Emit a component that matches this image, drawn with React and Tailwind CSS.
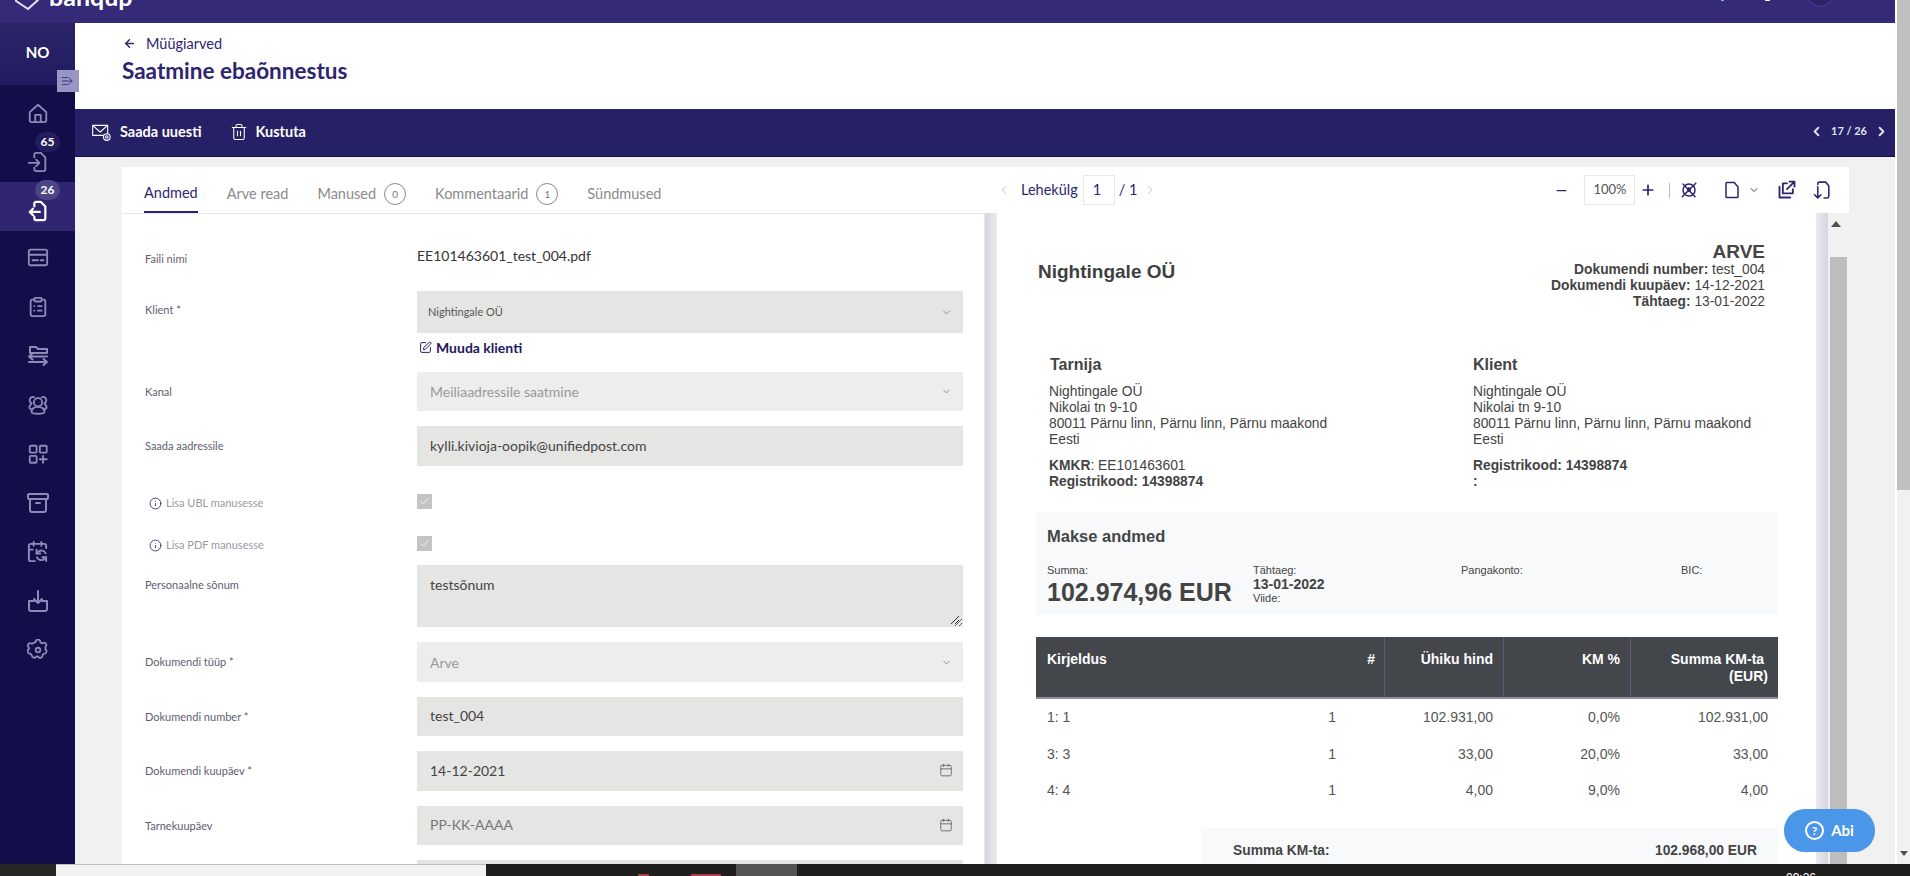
import React from 'react';
import { ChevronDown, ChevronLeft, ChevronRight, Calendar, Minus, Plus, ArrowLeft, Info, Trash2, Check, SquarePen, Archive, ClipboardList, CalendarSync } from 'lucide-react';

const Ico = ({ children, w = 22, h = 22, sw = 2, vb = '0 0 24 24', className = '' }) => (
  <svg width={w} height={h} viewBox={vb} fill="none" stroke="currentColor" strokeWidth={sw} strokeLinecap="round" strokeLinejoin="round" className={className}>
    {children}
  </svg>
);

const NavIcon = ({ h = 'h-[49px]', active, badge, badgeDark, children }) => (
  <div className={`relative flex w-full shrink-0 items-center justify-center ${h} ${active ? 'bg-[#2f2570] text-white' : 'text-[#8e8ab6]'}`}>
    {badge && (
      <span className={`absolute left-[35px] flex h-[20px] w-[25px] items-center justify-center rounded-full text-[12px] font-bold text-white ${badgeDark ? 'top-[-9px] bg-[#231d60]' : 'top-[-2px] bg-[#4b4486]'}`}>
        {badge}
      </span>
    )}
    {children}
  </div>
);

function Sidebar() {
  return (
    <div className="relative z-10 flex w-[75px] shrink-0 flex-col bg-[#120e4a]">
      <div className="relative flex h-[62px] items-center justify-center bg-gradient-to-b from-[#2c2469] to-[#211b5f] pb-[4px] text-[15px] font-bold text-white">
        NO
        <div className="absolute left-[57px] top-[47px] flex h-[22px] w-[22px] items-center justify-center bg-[#9a96c4] text-[#3a3180]">
          <Ico w={14} h={14} sw={1.6}>
            <path d="M2 6h10M2 12h6M2 18h10M14 7l5 5-5 5M8 12h11" />
          </Ico>
        </div>
      </div>
      <NavIcon h="h-[56px]">
        <Ico w={22} h={24}>
          <path d="M3 11 12 3l9 8v9a2 2 0 0 1-2 2H5a2 2 0 0 1-2-2z" />
          <path d="M9 22v-8h6v8" />
        </Ico>
      </NavIcon>
      <NavIcon h="h-[41px]" badge="65" badgeDark>
        <Ico w={22} h={24}>
          <path d="M8 7V4a2 2 0 0 1 2-2h5l5 5v13a2 2 0 0 1-2 2h-8a2 2 0 0 1-2-2v-2" />
          <path d="M2 13h11M10 9.500l3.500 3.500-3.500 3.500" />
        </Ico>
      </NavIcon>
      <NavIcon h="h-[49px]" active badge="26">
        <div className="mt-[8px]">
          <Ico w={22} h={24} sw={2.4}>
            <path d="M8 7V4a2 2 0 0 1 2-2h5l5 5v13a2 2 0 0 1-2 2h-8a2 2 0 0 1-2-2v-2" />
            <path d="M14 13H3M6.500 9.500 3 13l3.500 3.500" />
          </Ico>
        </div>
      </NavIcon>
      <NavIcon h="h-[52px]">
        <Ico w={24} h={22}>
          <rect x="2" y="4" width="20" height="17" rx="2" />
          <path d="M2 9.500h20M6 15.500h6M15 15.500h3" />
        </Ico>
      </NavIcon>
      <NavIcon h="h-[48px]">
        <ClipboardList size={22} strokeWidth={2} />
      </NavIcon>
      <NavIcon>
        <Ico w={24} h={24}>
          <path d="M4 9V3h6l2 2h9v4M4 9h17" />
          <path d="M3 12.500h18M6.500 9.500 3 12.500l3.500 3" />
          <path d="M3 18h18M17.500 15l3.500 3-3.500 3" />
        </Ico>
      </NavIcon>
      <NavIcon>
        <Ico w={24} h={22}>
          <circle cx="12" cy="9" r="4.500" />
          <path d="M5 20c0-4 3-6 7-6s7 2 7 6c0 2-14 2-14 0z" />
          <path d="M8 3.500a3.500 3.500 0 1 0-3 6.500L3 13c-1 2 0 3 2 4M16 3.500a3.500 3.500 0 1 1 3 6.500l2 3c1 2 0 3-2 4" />
        </Ico>
      </NavIcon>
      <NavIcon>
        <Ico w={22} h={22}>
          <rect x="3" y="3" width="7.500" height="7.500" rx="1" />
          <rect x="14" y="3" width="7.500" height="7.500" rx="1" />
          <rect x="3" y="14" width="7.500" height="7.500" rx="1" />
          <path d="M17.500 14v7.500M14 17.700h7.500" />
        </Ico>
      </NavIcon>
      <NavIcon>
        <Archive size={24} strokeWidth={2} />
      </NavIcon>
      <NavIcon>
        <CalendarSync size={23} strokeWidth={2} />
      </NavIcon>
      <NavIcon>
        <Ico w={24} h={24}>
          <path d="M12 2v12M8 10l4 4 4-4" />
          <path d="M8 12H3v8a2 2 0 0 0 2 2h14a2 2 0 0 0 2-2v-8h-5" />
        </Ico>
      </NavIcon>
      <NavIcon>
        <Ico w={22} h={22}>
          <circle cx="12" cy="12" r="2.500" />
          <path d="M9.500 3.200a2.500 2.500 0 0 1 5 0l.2.600 1.800.900.700-.200a2.500 2.500 0 0 1 3.200 3.800l-.4.500v2.200l.4.500a2.500 2.500 0 0 1-1 4.400l-.8.100-1.600 1.500-.1.700a2.500 2.500 0 0 1-4.700 1.100l-.2-.300h-1.900l-.3.300a2.500 2.500 0 0 1-4.600-1.100l-.100-.700-1.600-1.500-.8-.100a2.500 2.500 0 0 1-1-4.400l.4-.500V9.300l-.4-.500a2.500 2.500 0 0 1 3.200-3.800l.7.200 1.800-.900z" />
        </Ico>
      </NavIcon>
    </div>
  );
}

const Row = ({ label, mt, pt, children, icon }) => (
  <div className={`flex ${mt}`}>
    <div className={`flex w-[272px] shrink-0 items-center text-[11px] leading-[14px] ${pt} ${icon ? 'text-[#9a9aa2]' : 'text-[#5e6070]'}`}>
      {icon && <Info size={13} strokeWidth={1.6} className="ml-[4px] mr-[4px] text-[#2d2570]" />}
      {label}
    </div>
    <div className="w-[546px] shrink-0">{children}</div>
  </div>
);

const SelectBox = ({ h, value, small, disabled }) => (
  <div className={`flex ${h} items-center justify-between pr-[11px] ${disabled ? 'bg-[#ededed] pl-[13px] text-[14px] text-[#999999]' : 'bg-[#e5e5e3] pl-[11px] text-[#555555]'} ${small ? 'text-[11px]' : ''}`}>
    <span>{value}</span>
    <ChevronDown size={11} strokeWidth={1.8} className="text-[#777777]" />
  </div>
);

const TextBox = ({ h, value, placeholder, cal }) => (
  <div className={`relative ${h} bg-[#e5e5e3]`}>
    <input
      readOnly
      value={value}
      placeholder={placeholder}
      className="h-full w-full bg-transparent pb-[2px] pl-[13px] text-[14px] text-[#444444] outline-none placeholder:text-[#777777]"
    />
    {cal && <Calendar size={14} strokeWidth={1.5} className="absolute right-[10px] top-[12px] text-[#666666]" />}
  </div>
);

const Check2 = () => (
  <div className="flex h-[15px] w-[15px] items-center justify-center bg-[#c4c4c4] text-white">
    <Check size={11} strokeWidth={1.6} />
  </div>
);

const Badge = ({ n }) => (
  <span className="ml-[8px] flex h-[22px] w-[22px] items-center justify-center rounded-full border border-[#8a8a8a] text-[10px] text-[#777777]">{n}</span>
);

function Form() {
  return (
    <div className="h-full w-[863px] shrink-0 overflow-hidden border-r border-[#e9e9e9] bg-white pl-[23px]">
      <Row label="Faili nimi" mt="mt-[32px]" pt="h-[20px] pt-[6px]">
        <div className="text-[14px] leading-[20px] text-[#333333]">EE101463601_test_004.pdf</div>
      </Row>
      <Row label="Klient *" mt="mt-[25px]" pt="h-[38px] pt-[0px]">
        <SelectBox h="h-[42px]" value="Nightingale OÜ" small />
      </Row>
      <div className="ml-[272px] mt-[4px] flex h-[20px] items-center text-[14px] font-bold text-[#1c1860]">
        <SquarePen size={13} strokeWidth={1.8} className="ml-[2px] mr-[4px]" />
        Muuda klienti
      </div>
      <Row label="Kanal" mt="mt-[15px]" pt="h-[39px]">
        <SelectBox h="h-[39px]" value="Meiliaadressile saatmine" disabled />
      </Row>
      <Row label="Saada aadressile" mt="mt-[15px]" pt="h-[40px]">
        <TextBox h="h-[40px]" value="kylli.kivioja-oopik@unifiedpost.com" />
      </Row>
      <Row label="Lisa UBL manusesse" mt="mt-[28px]" pt="h-[18px]" icon>
        <Check2 />
      </Row>
      <Row label="Lisa PDF manusesse" mt="mt-[24px]" pt="h-[18px]" icon>
        <Check2 />
      </Row>
      <Row label="Personaalne sõnum" mt="mt-[11px]" pt="h-[40px]">
        <div className="relative">
          <textarea readOnly value="testsõnum" className="block h-[62px] w-full resize-y bg-[#e5e5e3] py-[10px] pl-[13px] pr-[12px] text-[14px] leading-[20px] text-[#444444] outline-none" />
          <svg width="10" height="10" viewBox="0 0 10 10" stroke="#333333" strokeWidth="1" className="pointer-events-none absolute bottom-[2px] right-[3px]">
            <path d="M1 9 9 1M5 9 9 5" />
          </svg>
        </div>
      </Row>
      <Row label="Dokumendi tüüp *" mt="mt-[15px]" pt="h-[40px]">
        <SelectBox h="h-[40px]" value="Arve" disabled />
      </Row>
      <Row label="Dokumendi number *" mt="mt-[15px]" pt="h-[39px]">
        <TextBox h="h-[39px]" value="test_004" />
      </Row>
      <Row label="Dokumendi kuupäev *" mt="mt-[15px]" pt="h-[40px]">
        <TextBox h="h-[40px]" value="14-12-2021" cal />
      </Row>
      <Row label="Tarnekuupäev" mt="mt-[15px]" pt="h-[39px]">
        <TextBox h="h-[39px]" placeholder="PP-KK-AAAA" cal />
      </Row>
      <Row label="" mt="mt-[15px]" pt="h-[39px]">
        <TextBox h="h-[39px]" />
      </Row>
    </div>
  );
}

function Invoice() {
  const addr = ['Nightingale OÜ', 'Nikolai tn 9-10', '80011 Pärnu linn, Pärnu linn, Pärnu maakond', 'Eesti'];
  const rows = [
    ['1: 1', '1', '102.931,00', '0,0%', '102.931,00', 'h-[36px]'],
    ['3: 3', '1', '33,00', '20,0%', '33,00', 'h-[37px]'],
    ['4: 4', '1', '4,00', '9,0%', '4,00', 'h-[36px]'],
  ];
  return (
    <div className="h-full w-[819px] shrink-0 overflow-hidden bg-white pl-[39px] pr-[38px] font-['Liberation_Sans',Arial,sans-serif] text-[13.8px] leading-[16px] text-[#444444]">
      <div className="flex justify-between pr-[13px] pt-[28px]">
        <div className="ml-[2px] mt-[21px] text-[19px] font-bold leading-[20px] text-[#3f3f3f]">Nightingale OÜ</div>
        <div className="text-right">
          <div className="text-[19px] font-bold leading-[21px]">ARVE</div>
          <div><b>Dokumendi number:</b> test_004</div>
          <div><b>Dokumendi kuupäev:</b> 14-12-2021</div>
          <div><b>Tähtaeg:</b> 13-01-2022</div>
        </div>
      </div>

      <div className="mt-[45px] flex pl-[13px]">
        <div className="w-[424px]">
          <div className="pl-[1px] text-[16px] font-bold leading-[20px]">Tarnija</div>
          <div className="mt-[9px]">{addr.map((l) => <div key={l}>{l}</div>)}</div>
          <div className="mt-[10px]"><b>KMKR</b>: EE101463601</div>
          <div className="font-bold">Registrikood: 14398874</div>
        </div>
        <div>
          <div className="text-[16px] font-bold leading-[20px]">Klient</div>
          <div className="mt-[9px]">{addr.map((l) => <div key={l}>{l}</div>)}</div>
          <div className="mt-[10px] font-bold">Registrikood: 14398874</div>
          <div className="font-bold">:</div>
        </div>
      </div>

      <div className="mt-[22px] h-[103px] bg-[#f8f9fb] pl-[11px] pt-[14px]">
        <div className="text-[16.500px] font-bold leading-[20px]">Makse andmed</div>
        <div className="mt-[18px] flex text-[11px] leading-[12px]">
          <div className="w-[206px]">
            <div>Summa:</div>
            <div className="pt-[2px] text-[25px] font-bold leading-[28px]">102.974,96 EUR</div>
          </div>
          <div className="w-[208px]">
            <div>Tähtaeg:</div>
            <div className="pt-[1px] text-[14px] font-bold leading-[15px]">13-01-2022</div>
            <div>Viide:</div>
          </div>
          <div className="w-[220px]">Pangakonto:</div>
          <div>BIC:</div>
        </div>
      </div>

      <div className="mt-[22px]">
        <div className="grid h-[62px] grid-cols-[348px_119px_127px_148px] border-b-2 border-[#8d8f94] bg-[#43464b] text-[14px] font-bold leading-[17px] text-white">
          <div className="flex justify-between pl-[11px] pr-[9px] pt-[14px]">
            <span>Kirjeldus</span>
            <span>#</span>
          </div>
          <div className="border-l border-[#5b5a80] pr-[10px] pt-[14px] text-right">Ühiku hind</div>
          <div className="border-l border-[#5b5a80] pr-[10px] pt-[14px] text-right">KM %</div>
          <div className="border-l border-[#5b5a80] pr-[10px] pt-[14px] text-right">Summa KM-ta&nbsp;<br />(EUR)</div>
        </div>
        {rows.map((r) => (
          <div key={r[0]} className={`grid grid-cols-[348px_119px_127px_148px] items-center text-[14px] text-[#555555] ${r[5]}`}>
            <div className="flex justify-between pl-[11px] pr-[48px]">
              <span>{r[0]}</span>
              <span>{r[1]}</span>
            </div>
            <div className="pr-[10px] text-right">{r[2]}</div>
            <div className="pr-[10px] text-right">{r[3]}</div>
            <div className="pr-[10px] text-right">{r[4]}</div>
          </div>
        ))}
      </div>

      <div className="ml-[165px] mt-[20px] flex h-[60px] justify-between bg-[#f8f9fb] pl-[32px] pr-[21px] pt-[15px] font-bold">
        <span>Summa KM-ta:</span>
        <span>102.968,00 EUR</span>
      </div>
    </div>
  );
}

function PdfToolbar() {
  return (
    <div className="flex h-[46px] w-[864px] shrink-0 items-center bg-white text-[14.500px] text-[#2d2570]">
      <ChevronLeft size={14} strokeWidth={1.5} className="ml-[12px] text-[#bbbbbb]" />
      <span className="ml-[10px]">Lehekülg</span>
      <div className="ml-[5px] flex h-[30px] w-[32px] items-center border border-[#e8e8e8] pl-[9px]">1</div>
      <span className="ml-[4px]">/ 1</span>
      <ChevronRight size={14} strokeWidth={1.5} className="ml-[6px] text-[#bbbbbb]" />
      <Minus size={15} strokeWidth={2} className="ml-[397px]" />
      <div className="ml-[15px] flex h-[30px] w-[51px] items-center justify-center border border-[#e8e8e8] text-[13px] text-[#555555]">100%</div>
      <Plus size={16} strokeWidth={2.6} className="ml-[5px]" />
      <div className="ml-[13px] h-[15px] w-px bg-[#bbbbbb]" />
      <Ico w={18} h={18} sw={2} className="ml-[10px]">
        <circle cx="12" cy="12" r="8" />
        <path d="M3 21 21 3M4 4l16 17M10 12l2-3 2 3" />
      </Ico>
      <Ico w={18} h={20} sw={2} className="ml-[25px]">
        <path d="M5 2h10l5 6v13a1 1 0 0 1-1 1H5a1 1 0 0 1-1-1V3a1 1 0 0 1 1-1z" />
      </Ico>
      <ChevronDown size={12} strokeWidth={1.8} className="ml-[7px]" />
      <Ico w={20} h={20} sw={2.2} className="ml-[17px]">
        <path d="M3 8v13h13M12 4H7v12h12v-5M12 11l9-9M15 2h6v6" />
      </Ico>
      <Ico w={19} h={20} sw={2} className="ml-[16px]">
        <path d="M10 2h6l4 5v13a2 2 0 0 1-2 2h-4M6 8v14M2 18l4 4 4-4M6 5V4a2 2 0 0 1 2-2h2" />
      </Ico>
    </div>
  );
}

export default function App() {
  return (
    <div className="relative flex h-[876px] w-[1910px] flex-col overflow-hidden bg-white font-['Lato','Noto_Sans',sans-serif] text-[#333333]">
      <div className="flex min-h-0 flex-1">
        <div className="flex w-[1895px] shrink-0 flex-col">
          {/* top bar, most of it is scrolled off */}
          <div className="relative flex h-[23px] shrink-0 items-end overflow-hidden bg-[#352a78] text-white">
            <svg width="24" height="12" viewBox="0 0 24 12" fill="none" stroke="#e8e6f2" strokeWidth="2" className="absolute left-[15px] top-0">
              <path d="M1 -2 v3 L13 9 L23 0 v-2" strokeLinejoin="round" />
            </svg>
            <span className="absolute left-[49px] top-[-19px] text-[25px] font-bold leading-[30px]">banqup</span>
            <span className="absolute left-[1721px] top-0 h-[1px] w-[3px] bg-[#7fb4e8]" />
            <span className="absolute left-[1765px] top-0 h-[1px] w-[5px] rounded-full bg-white" />
            <span className="absolute left-[1807px] top-[-19px] h-[26px] w-[26px] rounded-full border border-[#4a4190] bg-[#2c2468]" />
          </div>

          <div className="flex min-h-0 flex-1">
            <Sidebar />
            <div className="flex min-w-0 flex-1 flex-col bg-[#f1f1f1]">
              <div className="h-[86px] shrink-0 bg-white pl-[47px]">
                <div className="flex h-[36px] items-center pt-[5px] text-[14.500px] text-[#2d2570]">
                  <ArrowLeft size={13} strokeWidth={2.6} className="ml-[1px] mr-[10px]" />
                  Müügiarved
                </div>
                <div className="-mt-[1px] text-[22.500px] font-bold leading-[26px] text-[#2d2570]">Saatmine ebaõnnestus</div>
              </div>

              <div className="flex h-[48px] shrink-0 items-center justify-between border-b border-[#14103f] bg-[#262066] pb-[2px] pl-[15px] pr-[6px] text-[14.500px] font-bold text-white">
                <div className="flex items-center">
                  <Ico w={22} h={20} sw={1.3}>
                    <path d="M2 4h18v12H2zM2 4l9 8 9-8" />
                    <circle cx="19" cy="18" r="4" fill="#262066" />
                    <circle cx="19" cy="18" r="1.500" />
                  </Ico>
                  <span className="ml-[8px]">Saada uuesti</span>
                  <Trash2 size={18} strokeWidth={1.4} className="ml-[28px]" />
                  <span className="ml-[8px]">Kustuta</span>
                </div>
                <div className="flex items-center text-[11px] text-[#dfe3f2]">
                  <ChevronLeft size={15} strokeWidth={3} />
                  <span className="mx-[7px]">17 / 26</span>
                  <ChevronRight size={15} strokeWidth={3} />
                </div>
              </div>

              <div className="mt-[10px] flex min-h-0 flex-1 flex-col pl-[47px] pr-[46px]">
                <div className="flex shrink-0">
                  <div className="flex h-[46px] w-[863px] shrink-0 gap-[29px] bg-white pl-[22px] text-[14.500px] text-[#8a8a8a]">
                    <span className="flex items-center border-b-2 border-[#2d2570] pt-[8px] text-[#2d2570]">Andmed</span>
                    <span className="flex items-center pt-[8px]">Arve read</span>
                    <span className="flex items-center pt-[8px]">Manused<Badge n="0" /></span>
                    <span className="flex items-center pt-[8px]">Kommentaarid<Badge n="1" /></span>
                    <span className="flex items-center pt-[8px]">Sündmused</span>
                  </div>
                  <PdfToolbar />
                </div>
                <div className="flex min-h-0 flex-1">
                  <div className="border-t border-[#e6e6e6]"><Form /></div>
                  <div className="w-[12px] shrink-0 bg-gradient-to-r from-[#d6d5df] to-[#ecebf1]" />
                  <Invoice />
                  <div className="w-[12px] shrink-0 bg-gradient-to-r from-[#ecebf1] to-[#d6d5df]" />
                  <div className="relative w-[21px] shrink-0 bg-[#f1f1f1]">
                    <span className="absolute left-[3px] top-[8px] h-0 w-0 border-x-[5px] border-b-[6px] border-x-transparent border-b-[#505050]" />
                    <div className="absolute bottom-0 left-[2px] top-[44px] w-[17px] bg-[#bdbdbd]" />
                  </div>
                </div>
              </div>
            </div>
          </div>
        </div>

        {/* browser scrollbar */}
        <div className="relative w-[15px] shrink-0 border-l-2 border-white bg-[#f1f1f1]">
          <div className="h-[490px] bg-[#c0c0c0]" />
          <span className="absolute bottom-[8px] left-[3px] h-0 w-0 border-x-[4px] border-t-[5px] border-x-transparent border-t-[#505050]" />
        </div>
      </div>

      {/* windows taskbar */}
      <div className="relative flex h-[12px] shrink-0 bg-[#1f1f1f]">
        <div className="w-[56px] bg-[#262626]" />
        <div className="w-[430px] border-t border-[#bdbdbd] bg-[#f2f2f2]" />
        <div className="ml-[250px] w-[61px] bg-[#555354]" />
        <span className="absolute left-[638px] top-[10px] h-[2px] w-[11px] bg-[#a8404f]" />
        <span className="absolute left-[691px] top-[10px] h-[2px] w-[30px] bg-[#a8404f]" />
        <span className="absolute left-[1786px] top-[7px] font-['Liberation_Sans',Arial,sans-serif] text-[12px] leading-[14px] text-white">09:26</span>
      </div>

      <div className="absolute left-[1784px] top-[809px] z-20 flex h-[43px] w-[91px] items-center justify-center rounded-[21px] bg-[#4a96e8] text-[15px] font-bold text-white">
        <span className="mr-[7px] flex h-[19px] w-[19px] items-center justify-center rounded-full border-2 border-white text-[12px] leading-none">?</span>
        Abi
      </div>
    </div>
  );
}
